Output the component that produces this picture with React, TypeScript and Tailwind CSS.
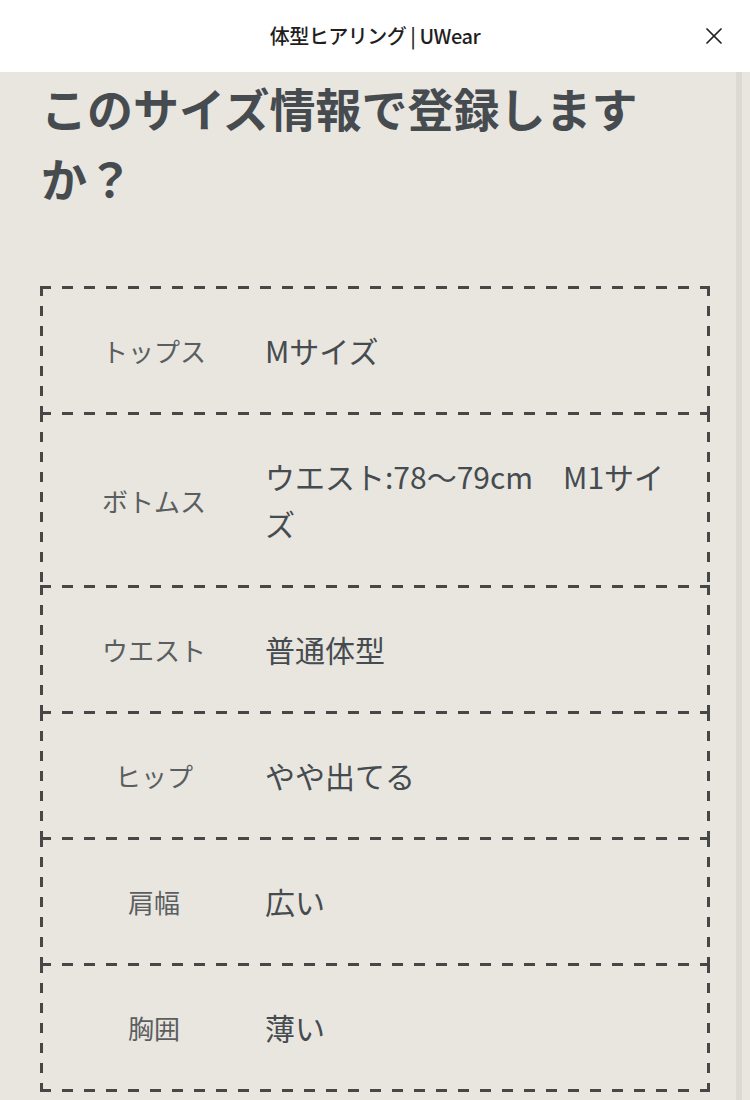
import { X } from "lucide-react";

const rows: { label: string; value: string }[] = [
  { label: "トップス", value: "Mサイズ" },
  { label: "ボトムス", value: "ウエスト:78〜79cm\u3000M1サイズ" },
  { label: "ウエスト", value: "普通体型" },
  { label: "ヒップ", value: "やや出てる" },
  { label: "肩幅", value: "広い" },
  { label: "胸囲", value: "薄い" },
];

const font = { fontFamily: '"Noto Sans CJK JP", "Noto Sans", sans-serif' };

// dashed frame drawn with gradients so the dash length matches the picture
const dashed =
  "[background:repeating-linear-gradient(90deg,#474747_0_11px,transparent_11px_22px)_left_top/100%_3px_no-repeat,repeating-linear-gradient(90deg,#474747_0_11px,transparent_11px_22px)_left_bottom/100%_3px_no-repeat,repeating-linear-gradient(180deg,#474747_0_10px,transparent_10px_20px)_left_top/3px_100%_no-repeat,repeating-linear-gradient(180deg,#474747_0_10px,transparent_10px_20px)_right_top/3px_100%_no-repeat]";

const App = () => {
  return (
    <div className="min-h-[1100px] w-[750px] bg-[#e8e6df] flex flex-col" style={font}>
      {/* header */}
      <header className="h-[72px] bg-white flex items-center justify-center relative shrink-0">
        <h1 className="text-[20px] font-medium text-[#1f1f1f] tracking-tight">体型ヒアリング | UWear</h1>
        <button className="absolute right-[22px] top-[22px] text-[#222]">
          <X size={28} strokeWidth={1.5} />
        </button>
      </header>

      <div className="flex flex-1">
        <main className="flex-1 pl-[40px] pr-[26px]">
          <h2 className="text-[46px] leading-[70px] font-bold text-[#464b50] pl-[1px]">
            このサイズ情報で登録しますか？
          </h2>

          <div className="mt-[74px] flex flex-col">
            {rows.map((row, i) => (
              <div
                key={row.label}
                className={`flex items-center px-[3px] py-[41px] ${dashed} ${i > 0 ? "-mt-[3px]" : ""}`}
              >
                <div className="w-[222px] shrink-0 text-center text-[26px] leading-[45px] text-[#5b5e61]">
                  {row.label}
                </div>
                <div className="flex-1 pr-[18px] text-[30px] leading-[47px] text-[#464b50]">
                  {row.value}
                </div>
              </div>
            ))}
          </div>
        </main>
        {/* scroll track */}
        <div className="w-[6px] bg-[#dbd9d2] shrink-0" />
        <div className="w-[8px] shrink-0" />
      </div>
    </div>
  );
};

export default App;
